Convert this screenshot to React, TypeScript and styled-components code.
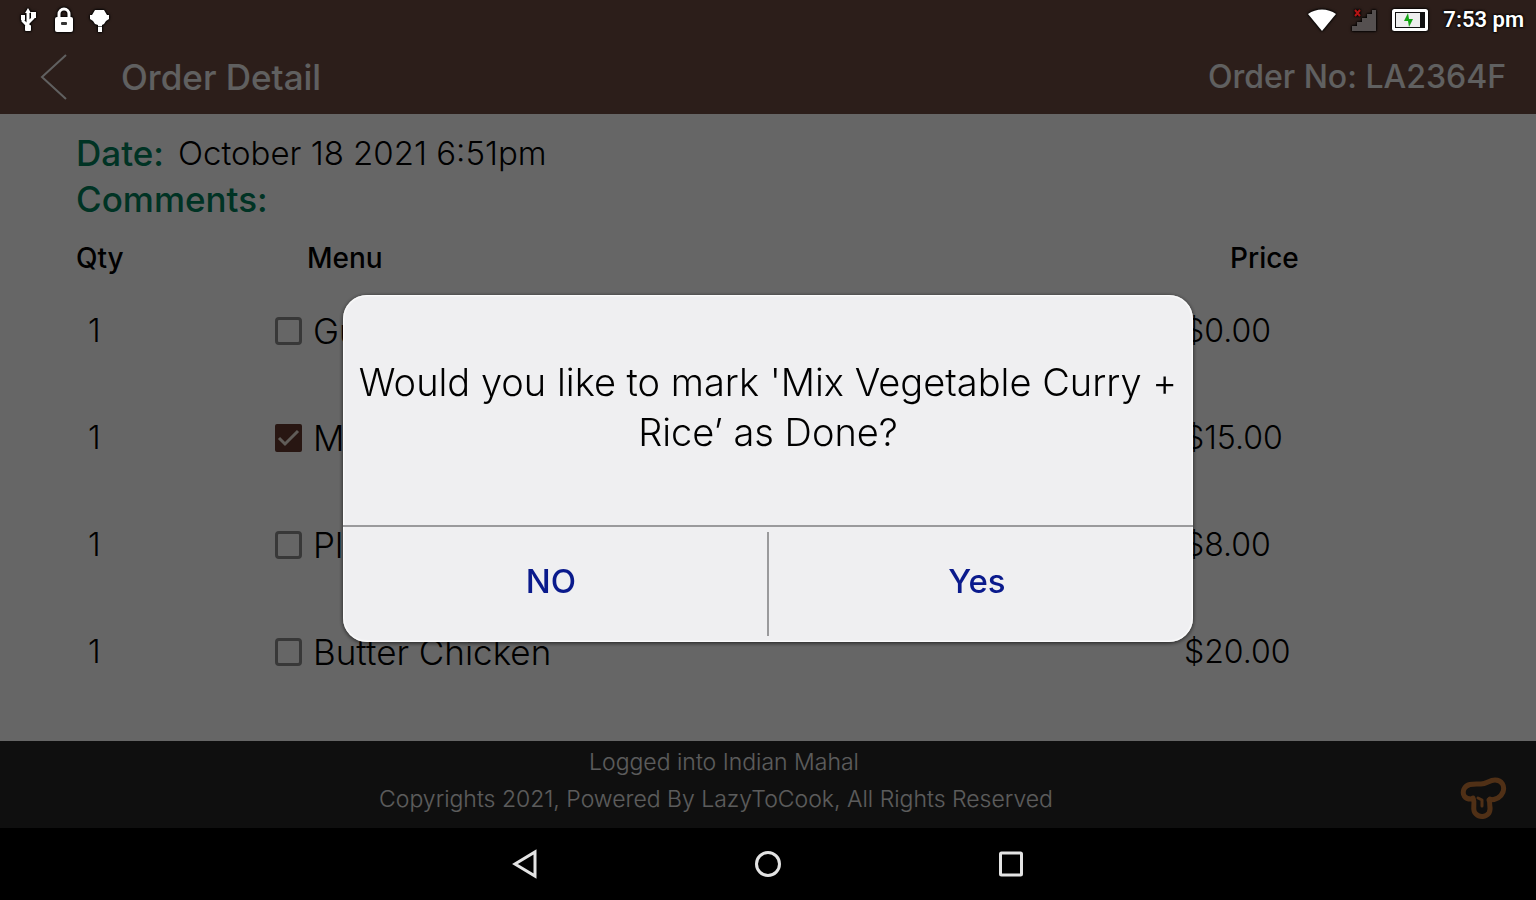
import React, { useState } from "react";
import styled, { createGlobalStyle } from "styled-components";

const GlobalStyle = createGlobalStyle`
  *, *::before, *::after { box-sizing: border-box; }
  body { margin: 0; background: #000; }
  body, button, input, table { font-family: Inter, "Open Sans", "Liberation Sans", sans-serif; }
`;

const Screen = styled.div`
  display: flex;
  flex-direction: column;
  min-height: 100vh;
`;

const StatusBar = styled.div`
  position: relative;
  z-index: 2;
  display: flex;
  align-items: center;
  justify-content: space-between;
  height: 40px;
  padding: 0 12px 0 16px;
  background: #2c1e1a;
  color: #fff;
`;

const StatusGroup = styled.div<{ $gap: number }>`
  display: flex;
  align-items: center;
  gap: ${(p) => p.$gap}px;

  svg {
    display: block;
    overflow: visible;
    filter: drop-shadow(0 0 1px #000) drop-shadow(0 0 1px #000);
  }
`;

const Clock = styled.time`
  font: 600 22px/40px Roboto, sans-serif;
  text-shadow: 0 0 2px #000, 0 0 2px #000, 0 0 3px #000;
`;

const Header = styled.header`
  display: flex;
  align-items: center;
  height: 74px;
  padding: 0 30px 0 36px;
  background: #6e4b41;
  color: #f0f0f0;
  font-size: 32px;
  font-weight: 500;
  line-height: 72px;
`;

const BackButton = styled.button`
  display: flex;
  padding: 0 4px;
  margin-right: 50px;
  border: 0;
  background: none;
  color: inherit;
`;

const Title = styled.h1`
  flex: 1;
  margin: 0;
  font-size: 35px;
  font-weight: inherit;
`;

const Main = styled.main`
  flex: 1;
  padding: 16px 0 16px 76px;
  background: #fff;
  color: #000;
`;

const Meta = styled.dl`
  margin: 0;
  line-height: 46px;

  dt { color: #00805a; font-size: 35px; font-weight: 500; }
  dd { margin: 0; font-size: 33px; font-weight: 300; }
`;

const MetaRow = styled.div`
  display: flex;
  gap: 14px;
`;

const Items = styled.table`
  width: 100%;
  margin-top: 9px;
  table-layout: fixed;
  border-collapse: collapse;
  text-align: left;
`;

const HeadCell = styled.th<{ $width?: number; $indent?: number }>`
  width: ${(p) => (p.$width ? `${p.$width}px` : "auto")};
  height: 54px;
  padding: 0 0 0 ${(p) => p.$indent ?? 0}px;
  font-size: 28px;
  font-weight: 500;
`;

const Cell = styled.td<{ $indent?: number }>`
  height: 107px;
  padding: 0 0 15px ${(p) => p.$indent ?? 0}px;
  font-size: 32px;
  font-weight: 300;
  line-height: 40px;
  white-space: nowrap;
`;

const ItemLabel = styled.label`
  display: flex;
  align-items: center;
  gap: 11px;
  font-size: 35px;
`;

const TickFrame = styled.span`
  display: grid;
  width: 27px;
  height: 28px;

  > * { grid-area: 1 / 1; }
  svg { pointer-events: none; }
`;

const Tick = styled.input`
  appearance: none;
  width: 27px;
  height: 28px;
  margin: 0;
  border: 3px solid #8c8c8c;
  border-radius: 4px;

  &:checked { background: #64392e; border-color: #64392e; border-radius: 2px; }
  &:not(:checked) + svg { display: none; }
`;

const Footer = styled.footer`
  display: flex;
  align-items: center;
  height: 87px;
  padding: 0 28px 0 0;
  background: #262626;
  color: #e6e6e6;
`;

const FooterText = styled.div`
  flex: 1;
  padding: 0 12px 8px 0;
  text-align: center;
  font-size: 23px;
  font-weight: 300;
  line-height: 37px;

  p { margin: 0; }
  p + p { padding-right: 16px; }
`;

const Brand = styled.svg`
  margin-top: 28px;
`;

const NavBar = styled.nav`
  position: relative;
  z-index: 2;
  display: flex;
  align-items: center;
  justify-content: center;
  gap: 200px;
  height: 72px;
  background: #000;
`;

const NavButton = styled.button`
  display: flex;
  justify-content: center;
  width: 43px;
  padding: 0;
  border: 0;
  background: none;
  color: #e4e4e4;
`;

const Overlay = styled.div`
  position: fixed;
  inset: 0;
  z-index: 1;
  display: flex;
  align-items: center;
  justify-content: center;
  padding-top: 37px;
  background: rgba(0, 0, 0, 0.6);
`;

const Dialog = styled.div`
  display: flex;
  flex-direction: column;
  width: 55.3%;
  min-width: 850px;
  border-radius: 24px;
  background: #efeff1;
  box-shadow: 0 1px 4px rgba(0, 0, 0, 0.7), inset 0 0 2px 1px #fff;
`;

const Question = styled.p`
  margin: 0;
  padding: 62px 12px 68px;
  color: #000;
  font-size: 38px;
  font-weight: 300;
  line-height: 50px;
  text-align: center;
`;

const Actions = styled.div`
  display: flex;
  padding: 5px 0 6px;
  border-top: 2px solid #9a9a9c;
`;

const ActionButton = styled.button`
  flex: 1;
  height: 104px;
  padding: 0 8px 6px 0;
  border: 0;
  background: none;
  color: #0a1a8c;
  font-size: 33px;
  font-weight: 500;

  & + & { border-left: 2px solid #9a9a9c; }
`;

const initialItems = [
  { name: "Gulab Jamun", price: "$0.00", done: false },
  { name: "Mix Vegetable Curry + Rice", price: "$15.00", done: true },
  { name: "Plain Naan", price: "$8.00", done: false },
  { name: "Butter Chicken", price: "$20.00", done: false },
];

function UsbIcon() {
  return (
    <svg width="24" height="26" viewBox="0 0 24 26" fill="none" stroke="#fff" strokeWidth="3">
      <path d="M12 5v17M11 18l-4-4v-4M12 16l5-5V8" />
      <path d="M12 1l3 5H9z" fill="#fff" stroke="none" />
      <path d="M5 8h4v5H5zM15 5h5v6h-5z" fill="#fff" stroke="none" />
      <rect x="9" y="18" width="6" height="6" rx="1" fill="#fff" stroke="none" />
    </svg>
  );
}

function LockIcon() {
  return (
    <svg width="24" height="26" viewBox="0 0 24 26">
      <path d="M7 11V7a5 5 0 0 1 10 0v4" fill="none" stroke="#fff" strokeWidth="3" />
      <rect x="3" y="10" width="18" height="15" rx="2" fill="#fff" />
      <rect x="9" y="15" width="6" height="3" rx="1" fill="#333" />
    </svg>
  );
}

function BulbIcon() {
  return (
    <svg width="24" height="26" viewBox="0 0 24 26" fill="#fff">
      <path d="M7 3h9l3 5h2v4l-3 2-2 3-2 1v7h-4v-7l-3-1-2-3-3-2V8h2z" />
      <path d="M10 19h4v1h-4z" fill="#666" />
    </svg>
  );
}

function WifiIcon() {
  return (
    <svg width="28" height="24" viewBox="0 0 28 24" fill="#fff">
      <path d="M0 6C8 0 20 0 28 6L14 23z" />
    </svg>
  );
}

function SignalIcon() {
  return (
    <svg width="26" height="24" viewBox="0 0 26 24">
      <path d="M1 23v-5h5v-4h5v-4h5V6h5V2h4v21z" fill="#555050" />
      <path d="M4 2l5 6M9 2L4 8" stroke="#b31414" strokeWidth="2" />
    </svg>
  );
}

function BatteryIcon() {
  return (
    <svg width="36" height="22" viewBox="0 0 36 22">
      <rect x="1.500" y="1.500" width="33" height="19" rx="1" fill="#111" stroke="#fff" strokeWidth="3" />
      <path d="M4 4h24v14H4z" fill="#eee" />
      <path d="M16 4l-4 8h4l1 6 4-8h-4z" fill="#14a514" />
    </svg>
  );
}

export default function App() {
  const [items, setItems] = useState(initialItems);
  const [open, setOpen] = useState(true);

  const toggle = (index: number) =>
    setItems(items.map((item, i) => (i === index ? { ...item, done: !item.done } : item)));

  return (
    <Screen>
      <GlobalStyle />
      <StatusBar>
        <StatusGroup $gap={12}>
          <UsbIcon />
          <LockIcon />
          <BulbIcon />
        </StatusGroup>
        <StatusGroup $gap={15}>
          <WifiIcon />
          <SignalIcon />
          <BatteryIcon />
          <Clock>7:53 pm</Clock>
        </StatusGroup>
      </StatusBar>

      <Header>
        <BackButton aria-label="Back">
          <svg width="27" height="46" viewBox="0 0 27 46" fill="none" stroke="currentColor" strokeWidth="2">
            <path d="M26 1L2 23l24 22" />
          </svg>
        </BackButton>
        <Title>Order Detail</Title>
        <span>Order No: LA2364F</span>
      </Header>

      <Main>
        <Meta>
          <MetaRow>
            <dt>Date:</dt>
            <dd>October 18 2021 6:51pm</dd>
          </MetaRow>
          <MetaRow>
            <dt>Comments:</dt>
            <dd />
          </MetaRow>
        </Meta>
        <Items>
          <thead>
            <tr>
              <HeadCell $width={199}>Qty</HeadCell>
              <HeadCell $indent={32}>Menu</HeadCell>
              <HeadCell $width={352} $indent={46}>Price</HeadCell>
            </tr>
          </thead>
          <tbody>
            {items.map((item, i) => (
              <tr key={item.name}>
                <Cell $indent={12}>1</Cell>
                <Cell>
                  <ItemLabel>
                    <TickFrame>
                      <Tick type="checkbox" checked={item.done} onChange={() => toggle(i)} />
                      <svg width="27" height="28" viewBox="0 0 27 28" fill="none" stroke="#f0e6dc" strokeWidth="3">
                        <path d="M4 14l6 6L23 7" />
                      </svg>
                    </TickFrame>
                    {item.name}
                  </ItemLabel>
                </Cell>
                <Cell>{item.price}</Cell>
              </tr>
            ))}
          </tbody>
        </Items>
      </Main>

      <Footer>
        <FooterText>
          <p>Logged into Indian Mahal</p>
          <p>Copyrights 2021, Powered By LazyToCook, All Rights Reserved</p>
        </FooterText>
        <Brand width="48" height="44" viewBox="0 0 48 44" fill="none" stroke="#c87837" strokeWidth="5" strokeLinejoin="round" strokeLinecap="round">
          <path d="M13 22C4 23 2 17 4 12c3-6 10-5 17-5 6 0 8-4 14-4 7 0 10 6 8 12-2 5-7 8-14 8" />
          <path d="M13 21c3 6-2 12 3 16 4 4 10 3 13-1 3-5-1-9 1-14" />
          <path d="M18 21l4 2v6" strokeWidth="3" />
        </Brand>
      </Footer>

      <NavBar>
        <NavButton aria-label="Back">
          <svg width="26" height="30" viewBox="0 0 26 30" fill="none" stroke="currentColor" strokeWidth="3">
            <path d="M23 3v24L3 15z" />
          </svg>
        </NavButton>
        <NavButton aria-label="Home">
          <svg width="28" height="28" viewBox="0 0 28 28" fill="none" stroke="currentColor" strokeWidth="3">
            <circle cx="14" cy="14" r="11.500" />
          </svg>
        </NavButton>
        <NavButton aria-label="Recent apps">
          <svg width="24" height="26" viewBox="0 0 24 26" fill="none" stroke="currentColor" strokeWidth="3">
            <rect x="1.500" y="2" width="21" height="22" rx="1" />
          </svg>
        </NavButton>
      </NavBar>

      {open && (
        <Overlay>
          <Dialog role="alertdialog" aria-modal="true" aria-labelledby="question">
            <Question id="question">Would you like to mark 'Mix Vegetable Curry + Rice’ as Done?</Question>
            <Actions>
              <ActionButton onClick={() => setOpen(false)}>NO</ActionButton>
              <ActionButton onClick={() => setOpen(false)}>Yes</ActionButton>
            </Actions>
          </Dialog>
        </Overlay>
      )}
    </Screen>
  );
}
